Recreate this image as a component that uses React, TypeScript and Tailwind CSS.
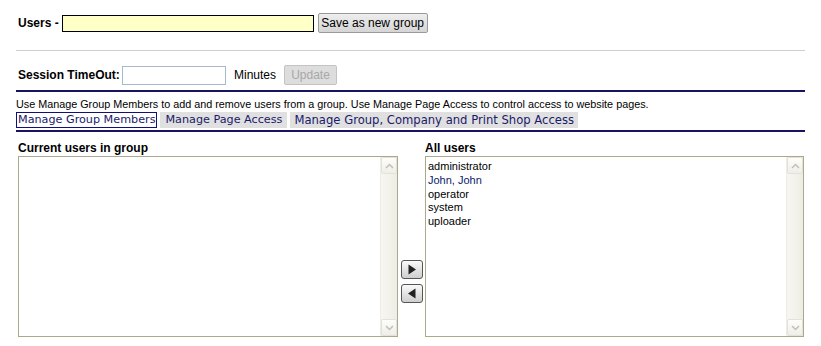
import type { ReactNode } from 'react';

const sans = { fontFamily: '"Liberation Sans", Arial, sans-serif' };
const verdana = { fontFamily: '"DejaVu Sans", Verdana, sans-serif' };

const allUsers = ['administrator', 'John, John', 'operator', 'system', 'uploader'];

function Chevron({ up }: { up?: boolean }) {
  return (
    <svg width="9" height="6" viewBox="0 0 9 6" aria-hidden>
      <path
        d={up ? 'M1 5 L4.5 1.5 L8 5' : 'M1 1 L4.5 4.5 L8 1'}
        fill="none"
        stroke="#c3c0b2"
        strokeWidth="1.5"
      />
    </svg>
  );
}

function ScrollBar() {
  return (
    <div className="flex h-full w-[17px] flex-col border-l border-[#eeede5] bg-gradient-to-r from-[#f7f6f1] to-[#eeede5]">
      <div className="flex h-[17px] items-center justify-center rounded-[2px] border border-[#e3e2da] bg-gradient-to-b from-[#fdfdfb] to-[#efeee8]">
        <Chevron up />
      </div>
      <div className="flex-1" />
      <div className="flex h-[17px] items-center justify-center rounded-[2px] border border-[#e3e2da] bg-gradient-to-b from-[#fdfdfb] to-[#efeee8]">
        <Chevron />
      </div>
    </div>
  );
}

function ListBox({ items }: { items: string[] }) {
  return (
    <div className="flex h-[181px] border border-[#aca98b] bg-white">
      <div className="flex-1 pl-[2px] pt-[3px] text-[11px] leading-[13.8px] text-black" style={sans}>
        {items.map((u) => (
          <div key={u} className={u === 'John, John' ? 'text-[#0a1a6a]' : ''}>
            {u}
          </div>
        ))}
      </div>
      <ScrollBar />
    </div>
  );
}

function ArrowButton({ children }: { children: ReactNode }) {
  return (
    <button
      type="button"
      className="flex h-[19px] w-[22px] items-center justify-center rounded-[3px] border border-[#555] bg-gradient-to-b from-[#fafafa] to-[#cfcfcf]"
    >
      {children}
    </button>
  );
}

export default function App() {
  return (
    <div className="h-[346px] w-[821px] bg-white pl-[16px] text-[11px] text-black" style={sans}>
      <div className="mt-[13px] flex h-[20px] items-center pl-[2px]">
        <span className="text-[12px] font-bold">Users -</span>
        <input
          className="ml-[3px] h-[17px] w-[252px] border border-black bg-[#ffffc8] outline-none"
          style={sans}
        />
        <button
          type="button"
          className="ml-[4px] h-[20px] w-[110px] rounded-[2px] border border-[#9a9a9a] bg-gradient-to-b from-[#eeeeee] to-[#d5d5d5] text-[12px] text-black"
          style={sans}
        >
          Save as new group
        </button>
      </div>

      <div className="mt-[17px] h-px w-[789px] bg-[#cfcfcf]" />

      <div className="mt-[14px] flex h-[20px] items-center pl-[2px]">
        <span className="w-[104px] text-[12px] font-bold">Session TimeOut:</span>
        <input className="h-[19px] w-[104px] border border-[#a5b9cc] bg-white outline-none" />
        <span className="ml-[8px] text-[12px]">Minutes</span>
        <button
          type="button"
          disabled
          className="ml-[8px] h-[20px] w-[53px] rounded-[2px] border border-[#c3c3c3] bg-[#dddddd] text-[12px] text-[#a8a8a8]"
          style={sans}
        >
          Update
        </button>
      </div>

      <div className="mt-[5px] h-[2px] w-[789px] bg-[#15155f]" />

      <p className="mt-[6px] text-[10.8px] leading-[13px]">
        Use Manage Group Members to add and remove users from a group. Use Manage Page Access to control access to website pages.
      </p>

      <div className="mt-px flex h-[16px] gap-[3px] text-[11.2px] leading-[14px] text-[#1a1a6a]" style={verdana}>
        <span className="border border-[#10107a] px-[1px]">Manage Group Members</span>
        <span className="bg-[#e0e0e0] px-[5px] pt-[1px]">Manage Page Access</span>
        <span className="bg-[#e0e0e0] px-[4px] pt-[1px] text-[11.6px]">Manage Group, Company and Print Shop Access</span>
      </div>

      <div className="mt-[2px] h-[2px] w-[789px] bg-[#15155f]" />

      <div className="mt-[9px] flex pl-[2px]">
        <div className="w-[380px]">
          <div className="h-[15px] text-[12px] font-bold leading-[14px]">Current users in group</div>
          <ListBox items={[]} />
        </div>
        <div className="flex w-[27px] flex-col items-center gap-[5px] pt-[119px]">
          <ArrowButton>
            <svg width="10" height="11" viewBox="0 0 10 11" aria-hidden>
              <path d="M1.5 0.5 L9 5.5 L1.5 10.5 Z" fill="#222" />
            </svg>
          </ArrowButton>
          <ArrowButton>
            <svg width="10" height="11" viewBox="0 0 10 11" aria-hidden>
              <path d="M8.5 0.5 L1 5.5 L8.5 10.5 Z" fill="#222" />
            </svg>
          </ArrowButton>
        </div>
        <div className="w-[379px]">
          <div className="h-[15px] text-[12px] font-bold leading-[14px]">All users</div>
          <ListBox items={allUsers} />
        </div>
      </div>
    </div>
  );
}
